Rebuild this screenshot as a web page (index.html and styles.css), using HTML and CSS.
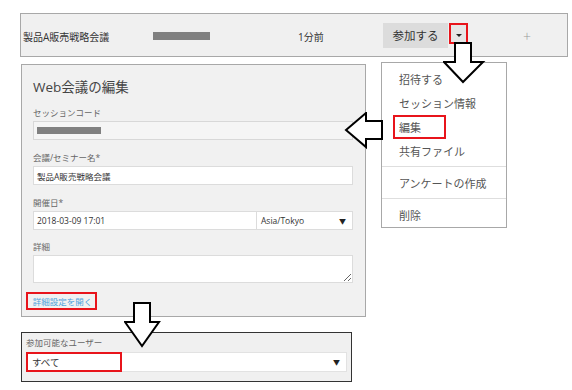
FILE: index.html
```html
<!DOCTYPE html>
<html lang="ja">
<head>
<meta charset="utf-8">
<link rel="stylesheet" href="styles.css">
</head>
<body>
<div class="topbar">
  <div class="tb-name">製品A販売戦略会議</div>
  <div class="tb-code"><span class="graybar"></span></div>
  <div class="tb-time">1分前</div>
  <div class="join-group">
    <div class="join-btn">参加する</div>
    <div class="caret-box"><span class="caret"></span></div>
  </div>
  <div class="tb-plus">+</div>
</div>

<div class="main">
  <div class="left-col">
    <div class="edit-panel">
      <div class="title">Web会議の編集</div>
      <div class="label">セッションコード</div>
      <div class="input disabled"><span class="graybar code"></span></div>
      <div class="label">会議/セミナー名*</div>
      <div class="input">製品A販売戦略会議</div>
      <div class="label">開催日*</div>
      <div class="date-row">
        <div class="input date">2018-03-09 17:01</div>
        <div class="input tz"><span>Asia/Tokyo</span><span class="tri">▼</span></div>
      </div>
      <div class="label">詳細</div>
      <textarea class="textarea" readonly></textarea>
      <div class="link-row"><span class="link">詳細設定を開く</span></div>
    </div>
    <div class="user-panel">
      <div class="label">参加可能なユーザー</div>
      <div class="select"><span class="sel-value">すべて</span><span class="tri">▼</span></div>
    </div>
  </div>
  <div class="menu">
    <div class="item">招待する</div>
    <div class="item">セッション情報</div>
    <div class="item"><span class="hl">編集</span></div>
    <div class="item">共有ファイル</div>
    <div class="divider"></div>
    <div class="item">アンケートの作成</div>
    <div class="divider"></div>
    <div class="item">削除</div>
  </div>
</div>

<svg class="arrow arrow-top" width="44" height="44" viewBox="0 0 44 44">
  <path d="M12 1 H28 V20 H40 L20 40 L1 20 H12 Z" fill="#fff" stroke="#000" stroke-width="2" stroke-linejoin="miter"/>
</svg>
<svg class="arrow arrow-left" width="42" height="40" viewBox="0 0 42 40">
  <path d="M2 18 L22 1 V9 H38 V27 H22 V35 Z" fill="#fff" stroke="#000" stroke-width="2"/>
</svg>
<svg class="arrow arrow-bottom" width="40" height="48" viewBox="0 0 40 48">
  <path d="M10 1 H26 V20 H35 L18 44 L1 20 H10 Z" fill="#fff" stroke="#000" stroke-width="2"/>
</svg>
</body>
</html>
```
FILE: styles.css
```css
* { box-sizing: border-box; }
html, body { margin: 0; padding: 0; background: #fff; }
body {
  width: 572px;
  height: 390px;
  position: relative;
  overflow: hidden;
  padding: 13px 0 0 20px;
  font-family: "Open Sans", "Noto Sans CJK JP", sans-serif;
  color: #333;
}

.topbar {
  width: 548px;
  height: 44px;
  border: 1px solid #a8a8a8;
  background: #f0f0f0;
  display: flex;
  align-items: center;
  padding-top: 2px;
  font-size: 10px;
  color: #333;
}
.tb-name { width: 132px; padding-left: 2px; white-space: nowrap; }
.tb-code { width: 145px; display: flex; align-items: center; }
.graybar { display: inline-block; background: #808080; height: 8px; width: 57px; }
.tb-time { width: 85px; }
.join-group { display: flex; align-items: flex-start; height: 25px; margin-top: -2px; }
.join-btn {
  width: 65px; height: 25px; background: #dcdcdc;
  font-size: 11.5px; color: #333;
  display: flex; align-items: center; justify-content: center;
}
.caret-box {
  width: 19px; height: 21px; margin-left: 1px;
  border: 2px solid #e8141b;
  background: #e6e6e6;
  display: flex; align-items: center; justify-content: center;
  padding-top: 4px;
}
.caret {
  width: 0; height: 0;
  border-left: 3px solid transparent;
  border-right: 3px solid transparent;
  border-top: 3px solid #222;
}
.tb-plus { margin-left: 55px; font-size: 14px; color: #999; font-weight: 300; }

.main { display: flex; align-items: flex-start; margin-top: 5px; }
.left-col { margin-left: 1px; margin-top: 2px; width: 345px; }

.edit-panel {
  width: 345px;
  height: 253px;
  border: 1px solid #a8a8a8;
  background: #f1f1f1;
  padding: 12px 12px 0 11px;
  display: flex;
  flex-direction: column;
}
.title { font-size: 13.5px; line-height: 20px; color: #444; margin-bottom: 10px; }
.label { font-size: 8.5px; line-height: 12px; color: #666; margin-bottom: 2px; }
.input {
  height: 19px;
  border: 1px solid #dcdcdc;
  background: #fff;
  font-size: 8.5px;
  color: #333;
  display: flex;
  align-items: center;
  padding-left: 3px;
  margin-bottom: 12px;
}
.input.disabled { background: #f5f5f5; border-color: #d8d8d8; }
.graybar.code { width: 64px; height: 7px; }
.date-row { display: flex; margin-bottom: 11px; }
.date-row .input { margin-bottom: 0; }
.input.date { width: 224px; }
.input.tz { width: 96px; border-left: none; justify-content: space-between; padding: 0 6px 0 4px; }
.tri { font-size: 7px; color: #222; }
.textarea {
  display: block;
  width: 320px; height: 28px;
  border: 1px solid #dcdcdc;
  background: #fff;
  margin: 0 0 9px 0;
  padding: 0;
  resize: both;
  outline: none;
}
.link-row { display: flex; }
.link {
  margin-left: -7px;
  height: 18px; width: 71px;
  border: 2px solid #e8141b;
  font-size: 8.5px; color: #4fa3dc;
  display: flex; align-items: center; justify-content: center;
  padding-left: 2px;
}

.user-panel {
  margin-top: 15px;
  width: 331px;
  height: 50px;
  border: 1px solid #333;
  background: #f0f0f0;
  padding: 4px 4px 0 4px;
}
.user-panel .label { margin-bottom: 3px; }
.select {
  height: 20px;
  background: #fff;
  border: 1px solid #e2e2e2;
  display: flex;
  align-items: center;
  justify-content: space-between;
  padding-right: 6px;
}
.sel-value {
  width: 96px; height: 20px;
  margin: -1px 0 0 -1px;
  border: 2px solid #e8141b;
  font-size: 9.5px; color: #333;
  display: flex; align-items: center;
  padding-left: 4px;
}

.menu {
  margin-left: 15px;
  width: 126px;
  height: 166px;
  border: 1px solid #a8a8a8;
  background: #fff;
  padding: 4px 0 2px;
  font-family: "Noto Sans CJK JP", sans-serif;
}
.item { height: 24px; line-height: 24px; padding-left: 17px; font-size: 11px; color: #555; }
.divider { height: 1px; background: #dedede; margin: 3px 0 4px; }
.hl {
  display: inline-block;
  margin-left: -6px;
  height: 24px;
  line-height: 20px;
  width: 53px;
  border: 2px solid #e8141b;
  padding-left: 4px;
  vertical-align: top;
}

.arrow { position: absolute; }
.arrow-top { left: 443px; top: 42px; }
.arrow-left { left: 344px; top: 112px; }
.arrow-bottom { left: 124px; top: 302px; }
```
